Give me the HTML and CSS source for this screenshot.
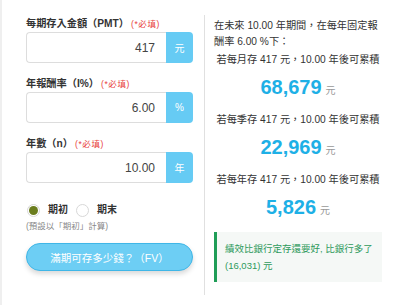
FILE: index.html
```html
<!DOCTYPE html>
<html lang="zh-Hant">
<head>
<meta charset="utf-8">
<title>FV</title>
<link rel="stylesheet" href="styles.css">
</head>
<body>
<div class="page">
  <div class="cols">
    <div class="form">
      <div class="field">
        <div class="label">每期存入金額（PMT）<span class="req">(*必填)</span></div>
        <div class="input-group"><div class="input">417</div><div class="addon">元</div></div>
      </div>
      <div class="field">
        <div class="label">年報酬率（I%）<span class="req">(*必填)</span></div>
        <div class="input-group"><div class="input">6.00</div><div class="addon">%</div></div>
      </div>
      <div class="field">
        <div class="label">年數（n）<span class="req">(*必填)</span></div>
        <div class="input-group"><div class="input">10.00</div><div class="addon">年</div></div>
      </div>
      <div class="radios">
        <label class="radio"><span class="dot on"></span>期初</label>
        <label class="radio"><span class="dot"></span>期末</label>
      </div>
      <div class="hint">(預設以「期初」計算)</div>
      <button class="calc">滿期可存多少錢？（FV）</button>
    </div>
    <div class="result">
      <p class="intro">在未來 10.00 年期間，在每年固定報酬率 6.00 %下：</p>
      <div class="block first">
        <div class="line">若每月存 417 元，10.00 年後可累積</div>
        <div class="num">68,679<span class="unit">元</span></div>
      </div>
      <div class="block">
        <div class="line">若每季存 417 元，10.00 年後可累積</div>
        <div class="num">22,969<span class="unit">元</span></div>
      </div>
      <div class="block">
        <div class="line">若每年存 417 元，10.00 年後可累積</div>
        <div class="num">5,826<span class="unit">元</span></div>
      </div>
      <div class="alert">績效比銀行定存還要好, 比銀行多了<br>(16,031) 元</div>
    </div>
  </div>
</div>
</body>
</html>
```
FILE: styles.css
```css
* { box-sizing: border-box; }
body {
  margin: 0;
  font-family: "Liberation Sans", "Noto Sans CJK TC", sans-serif;
  color: #333;
  background: #fff;
}
.page {
  height: 305px;
  border-left: 2px solid #efefef;
  padding: 13px 0 0 24px;
}
.cols { display: flex; align-items: flex-start; }
.form { width: 167px; display: flex; flex-direction: column; }
.field { margin-bottom: 10px; }
.label {
  font-size: 10.2px;
  line-height: 17px;
  height: 18px;
  padding-top: 2px;
  font-weight: 700;
  color: #333;
  margin-bottom: 1px;
  white-space: nowrap;
}
.req {
  color: #e8413c;
  font-weight: 400;
  font-size: 8.5px;
  letter-spacing: 0.6px;
  margin-left: 2px;
}
.input-group { display: flex; height: 31px; }
.input {
  flex: 1;
  border: 1px solid #ddd;
  border-right: 0;
  border-radius: 4px 0 0 4px;
  text-align: right;
  padding-right: 11px;
  font-size: 12px;
  line-height: 30px;
  color: #444;
}
.addon {
  width: 27px;
  background: #66cbf4;
  color: #fff;
  font-size: 10px;
  border-radius: 0 4px 4px 0;
  display: flex;
  align-items: center;
  justify-content: center;
}
.radios {
  margin-top: 8px;
  display: flex;
  align-items: center;
  height: 18px;
  gap: 7px;
}
.radio {
  display: flex;
  align-items: center;
  font-size: 10px;
  line-height: 18px;
  font-weight: 700;
  color: #333;
}
.dot {
  width: 13px;
  height: 13px;
  border-radius: 50%;
  border: 1px solid #d8d8d8;
  margin: 0 8px 0 1px;
  background: #fff;
  display: flex;
  align-items: center;
  justify-content: center;
}
.dot.on::after {
  content: "";
  width: 9px;
  height: 9px;
  border-radius: 50%;
  background: #6b7d1e;
}
.hint {
  font-size: 8.5px;
  line-height: 12px;
  height: 12px;
  color: #888;
  margin-top: 1px;
}
.calc {
  display: block;
  width: 100%;
  margin-top: 11px;
  height: 28px;
  border: 1px solid #3fb6e7;
  border-radius: 14px;
  background: #6dcef4;
  color: #fff;
  font-family: inherit;
  font-size: 10.5px;
  box-shadow: 0 3px 5px rgba(0, 0, 0, 0.15);
  padding: 0;
}
.result {
  margin-left: 11px;
  margin-top: 2px;
  border-left: 1px solid #e0e0e0;
  height: 280px;
  padding: 3px 0 0 9px;
  width: 178px;
  display: flex;
  flex-direction: column;
}
.intro { margin: 0; font-size: 10.2px; line-height: 16px; height: 32px; }
.block { margin: 4px 0 6px; text-align: center; }
.block.first { margin-top: 2px; }
.line { font-size: 10.2px; line-height: 16px; height: 16px; white-space: nowrap; }
.num {
  margin-top: 4px;
  height: 30px;
  font-size: 20px;
  line-height: 30px;
  font-weight: 700;
  color: #1eb0e6;
}
.unit { font-size: 10px; line-height: 10px; font-weight: 400; color: #999; margin-left: 4px; }
.alert {
  margin-top: 4px;
  border-left: 3px solid #1f9d57;
  background: #f5f8f6;
  padding: 8px;
  height: 50px;
  font-size: 9.5px;
  line-height: 17px;
  color: #2e9a5c;
  white-space: nowrap;
}
```
